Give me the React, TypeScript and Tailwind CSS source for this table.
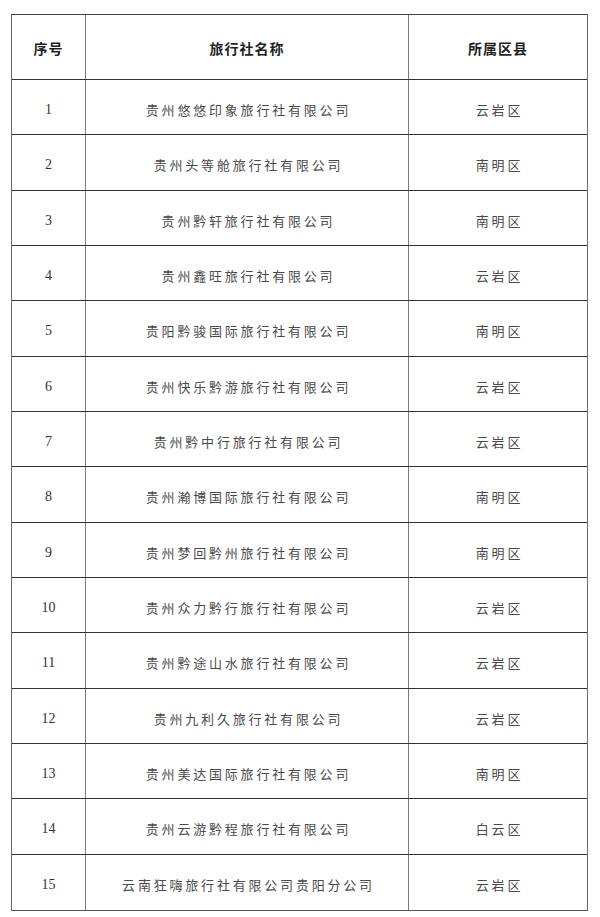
const rows: [string, string][] = [
  ['贵州悠悠印象旅行社有限公司', '云岩区'],
  ['贵州头等舱旅行社有限公司', '南明区'],
  ['贵州黔轩旅行社有限公司', '南明区'],
  ['贵州鑫旺旅行社有限公司', '云岩区'],
  ['贵阳黔骏国际旅行社有限公司', '南明区'],
  ['贵州快乐黔游旅行社有限公司', '云岩区'],
  ['贵州黔中行旅行社有限公司', '云岩区'],
  ['贵州瀚博国际旅行社有限公司', '南明区'],
  ['贵州梦回黔州旅行社有限公司', '南明区'],
  ['贵州众力黔行旅行社有限公司', '云岩区'],
  ['贵州黔途山水旅行社有限公司', '云岩区'],
  ['贵州九利久旅行社有限公司', '云岩区'],
  ['贵州美达国际旅行社有限公司', '南明区'],
  ['贵州云游黔程旅行社有限公司', '白云区'],
  ['云南狂嗨旅行社有限公司贵阳分公司', '云岩区'],
];

const cjk = "font-['Noto_Sans_CJK_SC',sans-serif]";

export default function App() {
  return (
    <div className="min-h-[917px] w-[600px] bg-white pl-[11px] pt-[14px]">
      <div className="w-[577px] border-x-[1.5px] border-b-[1.5px] border-t border-x-[#6b6b6b] border-b-[#555] border-t-[#444]">
        <div className="grid h-[65px] grid-cols-[74px_323px_1fr] border-b border-[#333]">
          <div className={`flex items-center justify-center border-r-[1.5px] border-[#7a7a7a] pt-[3px] text-[14px] font-bold tracking-[1px] text-[#1f1f1f] ${cjk}`}>
            序号
          </div>
          <div className={`flex items-center justify-center border-r-[1.5px] border-[#7a7a7a] pt-[3px] text-[14px] font-bold tracking-[1px] text-[#1f1f1f] ${cjk}`}>
            旅行社名称
          </div>
          <div className={`flex items-center justify-center pt-[3px] text-[14px] font-bold tracking-[1px] text-[#1f1f1f] ${cjk}`}>
            所属区县
          </div>
        </div>
        {rows.map(([name, area], i) => (
          <div
            key={i}
            className={`grid h-[55.33px] grid-cols-[74px_323px_1fr] ${i < rows.length - 1 ? 'border-b border-[#333]' : ''}`}
          >
            <div className="flex items-center justify-center border-r-[1.5px] border-[#7a7a7a] pt-[5px] font-['Liberation_Serif',serif] text-[14px] text-[#333]">
              {i + 1}
            </div>
            <div className={`flex items-center justify-center border-r-[1.5px] border-[#7a7a7a] pt-[5px] pl-[3px] text-[13px] tracking-[2.8px] text-[#4a4a4a] ${cjk}`}>
              {name}
            </div>
            <div className={`flex items-center justify-center pt-[5px] pl-[3px] text-[13px] tracking-[2.8px] text-[#4a4a4a] ${cjk}`}>
              {area}
            </div>
          </div>
        ))}
      </div>
    </div>
  );
}
